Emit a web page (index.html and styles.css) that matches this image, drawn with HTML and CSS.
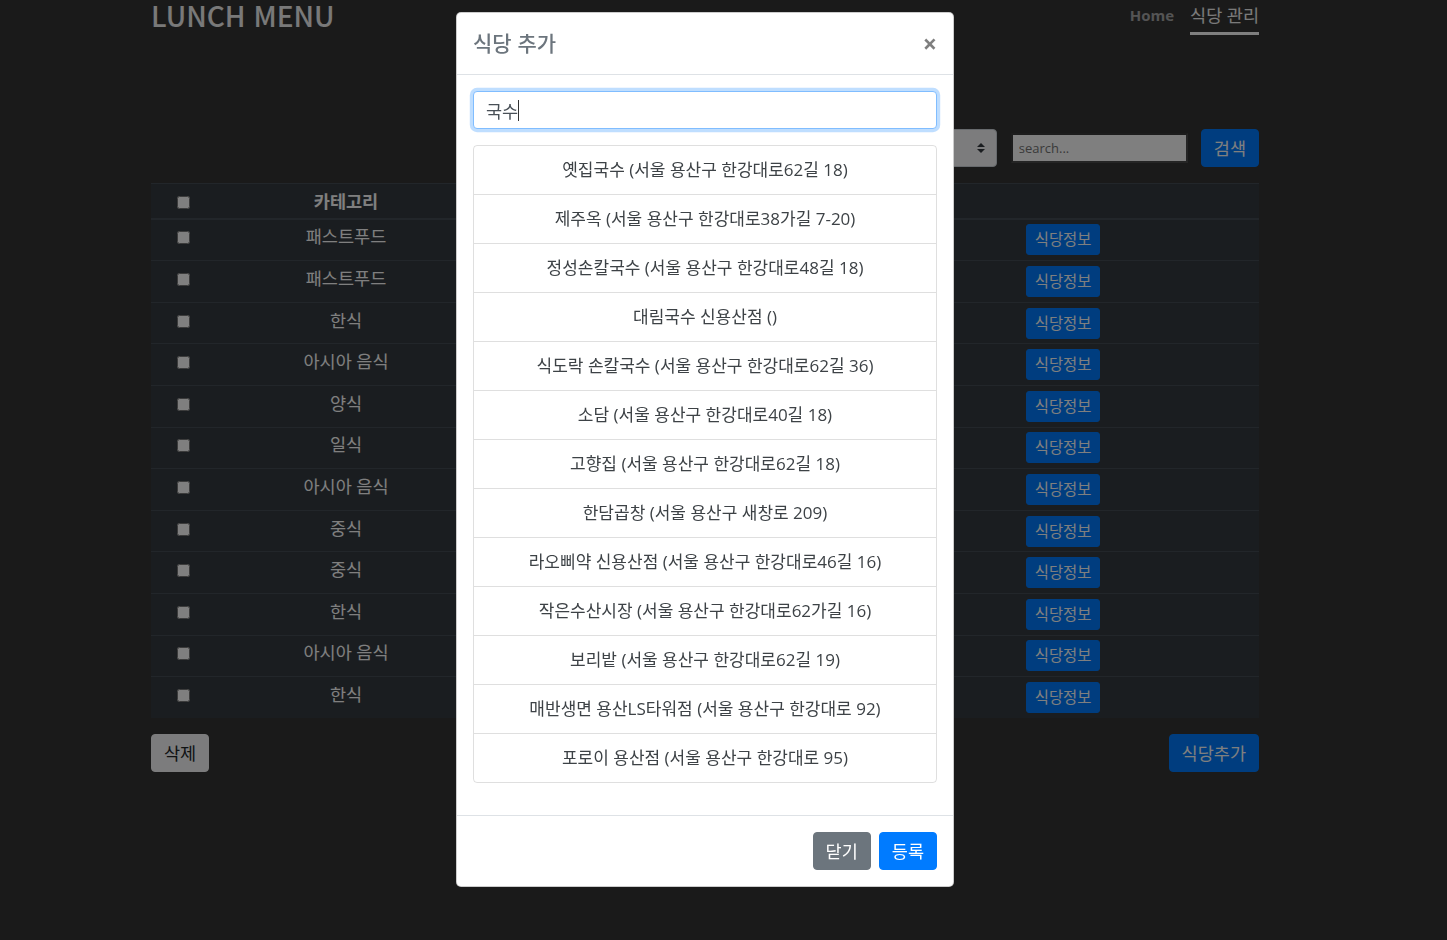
FILE: index.html
```html
<!DOCTYPE html>
<html lang="ko">
<head>
<meta charset="utf-8">
<title>LUNCH MENU</title>
<link rel="stylesheet" href="styles.css">
</head>
<body>
<div class="page">
  <div class="container">
    <header class="topbar">
      <h1 class="brand">LUNCH MENU</h1>
      <nav>
        <ul class="nav">
          <li><a class="nav-link home">Home</a></li>
          <li><a class="nav-link active">식당 관리</a></li>
        </ul>
      </nav>
    </header>

    <div class="toolbar">
      <div class="select-wrap">
        <select class="custom-select"><option>전체</option></select>
        <svg class="select-arrow" viewBox="0 0 4 5" width="8" height="10"><path d="M2 0L0 2h4zm0 5L0 3h4z" fill="#343a40"/></svg>
      </div>
      <input class="search-input" type="text" placeholder="search...">
      <button class="btn btn-primary">검색</button>
    </div>

    <table class="table">
      <colgroup>
        <col class="col-check">
        <col class="col-cat">
        <col class="col-name">
        <col class="col-act">
      </colgroup>
      <thead>
        <tr><th><input type="checkbox"></th><th>카테고리</th><th></th><th></th></tr>
      </thead>
      <tbody>
        <tr><td><input type="checkbox"></td><td>패스트푸드</td><td></td><td><button class="btn btn-primary btn-sm">식당정보</button></td></tr>
        <tr><td><input type="checkbox"></td><td>패스트푸드</td><td></td><td><button class="btn btn-primary btn-sm">식당정보</button></td></tr>
        <tr><td><input type="checkbox"></td><td>한식</td><td></td><td><button class="btn btn-primary btn-sm">식당정보</button></td></tr>
        <tr><td><input type="checkbox"></td><td>아시아 음식</td><td></td><td><button class="btn btn-primary btn-sm">식당정보</button></td></tr>
        <tr><td><input type="checkbox"></td><td>양식</td><td></td><td><button class="btn btn-primary btn-sm">식당정보</button></td></tr>
        <tr><td><input type="checkbox"></td><td>일식</td><td></td><td><button class="btn btn-primary btn-sm">식당정보</button></td></tr>
        <tr><td><input type="checkbox"></td><td>아시아 음식</td><td></td><td><button class="btn btn-primary btn-sm">식당정보</button></td></tr>
        <tr><td><input type="checkbox"></td><td>중식</td><td></td><td><button class="btn btn-primary btn-sm">식당정보</button></td></tr>
        <tr><td><input type="checkbox"></td><td>중식</td><td></td><td><button class="btn btn-primary btn-sm">식당정보</button></td></tr>
        <tr><td><input type="checkbox"></td><td>한식</td><td></td><td><button class="btn btn-primary btn-sm">식당정보</button></td></tr>
        <tr><td><input type="checkbox"></td><td>아시아 음식</td><td></td><td><button class="btn btn-primary btn-sm">식당정보</button></td></tr>
        <tr><td><input type="checkbox"></td><td>한식</td><td></td><td><button class="btn btn-primary btn-sm">식당정보</button></td></tr>
      </tbody>
    </table>

    <div class="actions">
      <button class="btn btn-light">삭제</button>
      <button class="btn btn-primary">식당추가</button>
    </div>
  </div>
</div>

<div class="backdrop"></div>

<div class="modal">
  <div class="modal-dialog">
    <div class="modal-content">
      <div class="modal-header">
        <h5 class="modal-title">식당 추가</h5>
        <button class="close" type="button">&times;</button>
      </div>
      <div class="modal-body">
        <div class="input-wrap">
          <input class="form-control focused" type="text" value="국수">
          <span class="caret"></span>
        </div>
        <ul class="list-group">
          <li class="list-group-item">옛집국수 (서울 용산구 한강대로62길 18)</li>
          <li class="list-group-item">제주옥 (서울 용산구 한강대로38가길 7-20)</li>
          <li class="list-group-item">정성손칼국수 (서울 용산구 한강대로48길 18)</li>
          <li class="list-group-item">대림국수 신용산점 ()</li>
          <li class="list-group-item">식도락 손칼국수 (서울 용산구 한강대로62길 36)</li>
          <li class="list-group-item">소담 (서울 용산구 한강대로40길 18)</li>
          <li class="list-group-item">고향집 (서울 용산구 한강대로62길 18)</li>
          <li class="list-group-item">한담곱창 (서울 용산구 새창로 209)</li>
          <li class="list-group-item">라오삐약 신용산점 (서울 용산구 한강대로46길 16)</li>
          <li class="list-group-item">작은수산시장 (서울 용산구 한강대로62가길 16)</li>
          <li class="list-group-item">보리밭 (서울 용산구 한강대로62길 19)</li>
          <li class="list-group-item">매반생면 용산LS타워점 (서울 용산구 한강대로 92)</li>
          <li class="list-group-item">포로이 용산점 (서울 용산구 한강대로 95)</li>
        </ul>
      </div>
      <div class="modal-footer">
        <button class="btn btn-secondary">닫기</button>
        <button class="btn btn-primary">등록</button>
      </div>
    </div>
  </div>
</div>
</body>
</html>
```

FILE: styles.css
```css
* { box-sizing: border-box; }

html, body {
  margin: 0;
  padding: 0;
}

body {
  background: #353535;
  font-family: "Open Sans", "Noto Sans CJK KR", sans-serif;
  font-size: 16px;
  line-height: 24px;
  color: #fff;
  overflow: hidden;
  height: 940px;
}

.page {
  width: 1410px;
}

.container {
  width: 1108px;
  margin: 0 auto;
}

/* header */
.topbar {
  display: flex;
  justify-content: space-between;
  align-items: flex-start;
  height: 35px;
}

.brand {
  margin: 0;
  font-family: "Noto Sans CJK KR", "Open Sans", sans-serif;
  font-size: 28px;
  font-weight: 500;
  line-height: 30px;
  color: #f2f2f2;
}

.nav {
  display: flex;
  gap: 16px;
  list-style: none;
  margin: 0;
  padding: 0;
}

.nav-link {
  display: block;
  padding-top: 3px;
  padding-bottom: 5px;
  line-height: 24px;
  border-bottom: 3px solid transparent;
  color: #aaa;
  text-decoration: none;
}

.nav-link.home {
  font-weight: 700;
  font-size: 15px;
  color: #a8a8a8;
}

.nav-link.active {
  color: #f4f4f4;
  font-size: 17.5px;
  border-bottom-color: #fff;
}

/* toolbar */
.toolbar {
  margin-top: 94px;
  display: flex;
  justify-content: flex-end;
  align-items: center;
  height: 38px;
}

.select-wrap {
  position: relative;
  width: 220px;
  height: 38px;
}

.custom-select {
  appearance: none;
  -webkit-appearance: none;
  width: 100%;
  height: 38px;
  padding: 6px 28px 6px 12px;
  border: 1px solid #ced4da;
  border-radius: 4px;
  background: #f8f9fa;
  font: inherit;
  color: #495057;
}

.select-arrow {
  position: absolute;
  right: 12px;
  top: 14px;
}

.search-input {
  margin-left: 14px;
  width: 177px;
  height: 30px;
  border: 2px solid;
  border-color: #3a3a3a #4a4a4a #4a4a4a #3a3a3a;
  background: #fff;
  padding: 1px 6px;
  font-family: "Open Sans", sans-serif;
  font-size: 13px;
  color: #222;
}

.search-input::placeholder {
  color: #757575;
}

/* buttons */
.btn {
  display: inline-block;
  font-family: "Open Sans", "Noto Sans CJK KR", sans-serif;
  font-size: 17.5px;
  line-height: 24px;
  padding: 6px 12px;
  border: 1px solid transparent;
  border-radius: 4px;
  cursor: pointer;
}

.toolbar .btn {
  margin-left: 13px;
}

.btn-primary {
  background: #007bff;
  border-color: #007bff;
  color: #fff;
}

.btn-secondary {
  background: #6c757d;
  border-color: #6c757d;
  color: #fff;
}

.btn-light {
  background: #f8f9fa;
  border-color: #f8f9fa;
  color: #212529;
}

.btn-sm {
  font-size: 15.4px;
  line-height: 21px;
  padding: 4px 8px;
  border-radius: 3px;
}

/* table */
.table {
  width: 100%;
  margin-top: 16px;
  margin-bottom: 16px;
  border-collapse: collapse;
  table-layout: fixed;
  background: #343a40;
  color: #fff;
  font-size: 17.5px;
}

.col-check { width: 64px; }
.col-cat { width: 262px; }
.col-name { width: 544px; }
.col-act { width: 238px; }

.table th,
.table td {
  padding: 4.8px;
  border-top: 1px solid #454d55;
  vertical-align: top;
  text-align: center;
  line-height: 24px;
}

.table thead th {
  border-bottom: 2px solid #454d55;
  font-weight: 700;
}

.table td:last-child,
.table th:last-child {
  text-align: left;
}

.table input[type="checkbox"] {
  margin: 0;
  width: 13px;
  height: 13px;
  vertical-align: -1px;
}

.actions {
  display: flex;
  justify-content: space-between;
}

/* backdrop + modal */
.backdrop {
  position: fixed;
  inset: 0;
  background: rgba(0, 0, 0, 0.5);
}

.modal {
  position: fixed;
  top: 0;
  left: 0;
  width: 1410px;
  height: 100%;
}

.modal-dialog {
  width: 498px;
  margin: 12px auto 0;
}

.modal-content {
  background: #fff;
  border: 1px solid rgba(0, 0, 0, 0.2);
  border-radius: 5px;
  color: #212529;
}

.modal-header {
  display: flex;
  justify-content: space-between;
  align-items: flex-start;
  padding: 14px 16px 17px;
  border-bottom: 1px solid #dee2e6;
}

.modal-title {
  margin: 0;
  font-family: "Noto Sans CJK KR", sans-serif;
  font-size: 21px;
  font-weight: 500;
  line-height: 30px;
  color: #6c757d;
}

.close {
  background: none;
  border: 0;
  padding: 0;
  margin: 2px 0 0 0;
  font-family: "Open Sans", sans-serif;
  font-size: 25px;
  font-weight: 700;
  line-height: 28px;
  color: #000;
  opacity: 0.5;
  text-shadow: 0 1px 0 #fff;
  cursor: pointer;
}

.modal-body {
  padding: 16px;
}

.input-wrap {
  position: relative;
}

.form-control {
  display: block;
  width: 100%;
  height: 38px;
  padding: 6px 12px;
  font-family: "Open Sans", "Noto Sans CJK KR", sans-serif;
  font-size: 17.5px;
  line-height: 24px;
  color: #495057;
  background: #fff;
  border: 1px solid #ced4da;
  border-radius: 4px;
  outline: none;
}

.form-control.focused {
  border-color: #80bdff;
  box-shadow: 0 0 0 3.2px rgba(0, 123, 255, 0.25);
}

.caret {
  position: absolute;
  left: 45px;
  top: 9px;
  width: 1px;
  height: 21px;
  background: #333;
}

.list-group {
  list-style: none;
  margin: 16px 0 16px;
  padding: 0;
  border: 1px solid rgba(0, 0, 0, 0.125);
  border-radius: 4px;
}

.list-group-item {
  padding: 12px 20px 12px;
  font-size: 17px;
  line-height: 24px;
  text-align: center;
  color: #3d4246;
  border-top: 1px solid rgba(0, 0, 0, 0.125);
}

.list-group-item:first-child {
  border-top: 0;
}

.modal-footer {
  display: flex;
  justify-content: flex-end;
  padding: 12px;
  border-top: 1px solid #dee2e6;
}

.modal-footer .btn {
  margin: 4px;
}
```
